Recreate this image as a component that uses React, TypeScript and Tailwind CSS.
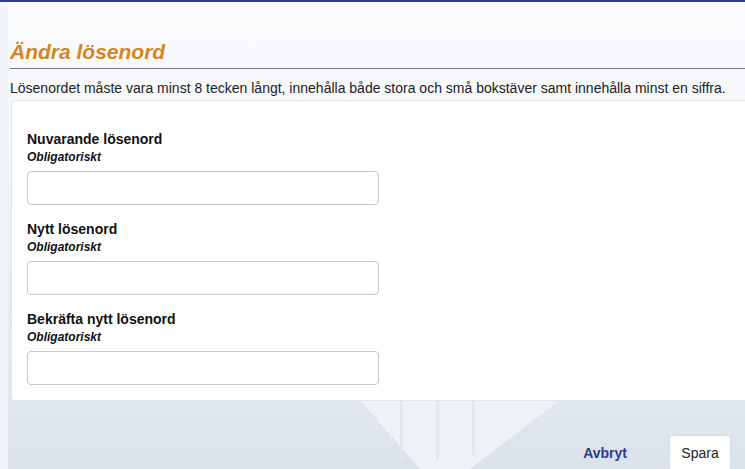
import React from "react";

const Field = ({ label }: { label: string }) => (
  <div className="flex flex-col">
    <div className="text-[14px] leading-[20px] font-bold text-[#111]">{label}</div>
    <div className="text-[12px] leading-[16px] italic font-semibold text-[#111]">Obligatoriskt</div>
    <input
      type="password"
      className="mt-[6px] w-[352px] h-[34px] rounded-[4px] border border-[#c8c8c8] bg-white outline-none"
    />
  </div>
);

export default function App() {
  return (
    <div
      className="relative w-[745px] h-[469px] overflow-hidden bg-gradient-to-b from-[#fbfcfe] via-[#eef2f6] to-[#dbe2ea]"
      style={{ fontFamily: '"Liberation Sans", Arial, sans-serif' }}
    >
      <svg className="absolute left-0 top-0" width="745" height="469" viewBox="0 0 745 469">
        <rect x="0" y="0" width="8" height="469" fill="#f2f5f9" />
        <path d="M360 400 L420 469 L470 469 L560 400 Z" fill="#eef2f7" />
        <rect x="400" y="400" width="3" height="60" fill="#e1e7ee" />
        <rect x="436" y="400" width="3" height="60" fill="#e1e7ee" />
        <rect x="472" y="400" width="3" height="55" fill="#e1e7ee" />
      </svg>
      <div className="relative h-[2px] bg-[#2b3f8f]" />
      <div className="relative pl-[10px] pt-[37px]">
        <h1 className="text-[21px] leading-[26px] font-bold italic text-[#d4861c]">Ändra lösenord</h1>
        <div className="mt-[3px] h-px bg-[#777]" />
        <p className="mt-[10px] text-[14px] leading-[18px] text-[#222]">
          Lösenordet måste vara minst 8 tecken långt, innehålla både stora och små bokstäver samt innehålla minst en siffra.
        </p>
        <div className="mt-[3px] ml-[1px] mr-[-10px] bg-white border border-[#e2e6ea] rounded-[4px] pl-[15px] pt-[28px] pb-[15px] flex flex-col gap-[14px]">
          <Field label="Nuvarande lösenord" />
          <Field label="Nytt lösenord" />
          <Field label="Bekräfta nytt lösenord" />
        </div>
        <div className="flex justify-end items-center pr-[14px] pt-[34px]">
          <button className="text-[14px] font-bold text-[#2b3f8f] mr-[42px]">Avbryt</button>
          <button className="w-[62px] h-[36px] bg-white border border-[#d8dde3] rounded-[4px] text-[14px] text-[#222]">
            Spara
          </button>
        </div>
      </div>
    </div>
  );
}
